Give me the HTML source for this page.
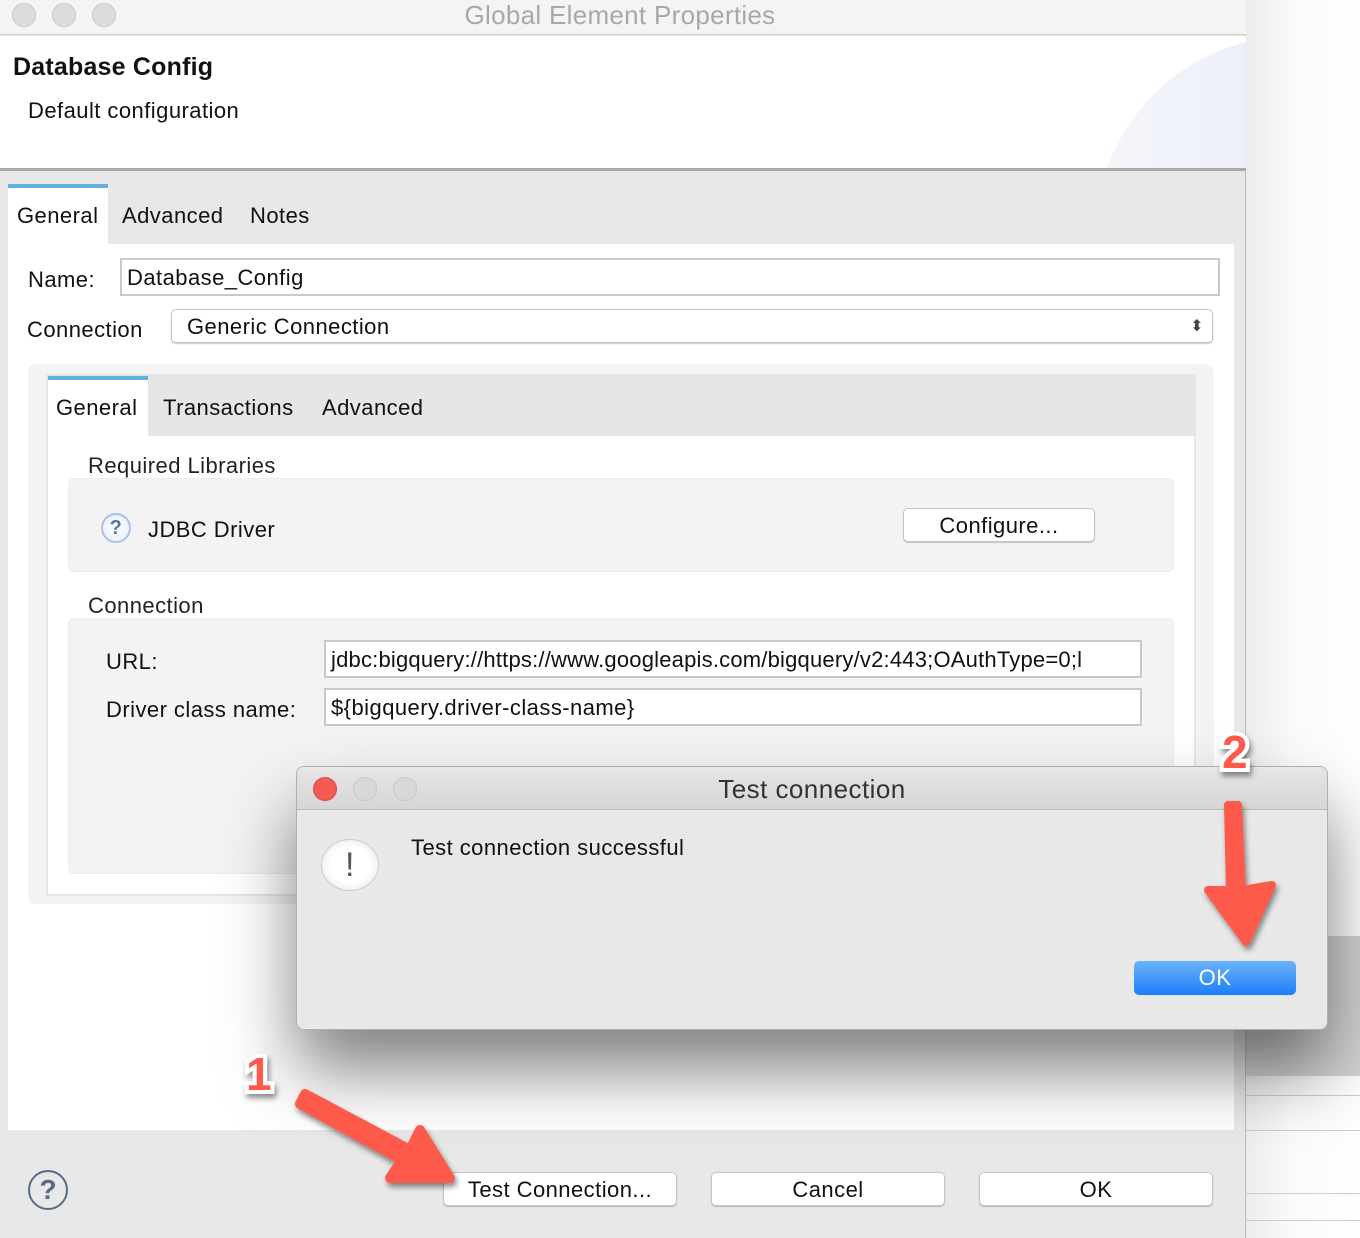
<!DOCTYPE html>
<html><head><meta charset="utf-8"><style>
*{box-sizing:border-box;margin:0;padding:0}
body{width:1360px;height:1238px;position:relative;overflow:hidden;background:#fff;font-family:"Liberation Sans",sans-serif;color:#111;font-size:22px;letter-spacing:.45px}
.a{position:absolute}
.inp{position:absolute;background:#fff;border:2px solid #c9c9c9;padding-left:5px;line-height:35px;font-size:22px;white-space:nowrap;overflow:hidden}
.btn{position:absolute;background:#fff;border:1px solid #c4c4c4;border-radius:5px;box-shadow:0 1px 1px rgba(0,0,0,.2);text-align:center;font-size:22px;line-height:34px}
.dot{position:absolute;width:24px;height:24px;border-radius:50%;background:#d8d8d8;border:1px solid #c8c8c8}
</style></head><body>
<div class="a" style="left:1246px;top:0;width:114px;height:1238px;background:linear-gradient(90deg,#ececec,#fafafa 40%,#fff)"></div>
<div class="a" style="left:1246px;top:936px;width:114px;height:140px;background:#d4d4d4"></div>
<div class="a" style="left:1246px;top:1095px;width:114px;height:1px;background:#ccc"></div>
<div class="a" style="left:1246px;top:1130px;width:114px;height:1px;background:#ccc"></div>
<div class="a" style="left:1246px;top:1193px;width:114px;height:1px;background:#ccc"></div>
<div class="a" style="left:1246px;top:1220px;width:114px;height:1px;background:#ccc"></div>

<div class="a" style="left:0;top:0;width:1246px;height:1238px;background:#e8e8e8;border-right:1px solid #bdbdbd"></div>
<div class="a" style="left:0;top:0;width:1246px;height:35px;background:#f4f4f4;border-bottom:1px solid #d0d0d0"></div>
<div class="dot" style="left:12px;top:3px;background:#dcdcdc"></div>
<div class="dot" style="left:52px;top:3px;background:#dcdcdc"></div>
<div class="dot" style="left:92px;top:3px;background:#dcdcdc"></div>
<div class="a" style="left:0;top:0;width:1240px;text-align:center;line-height:30px;font-size:26px;color:#a8a8a8;letter-spacing:.3px">Global Element Properties</div>
<div class="a" style="left:0;top:36px;width:1246px;height:132px;background:#fff;overflow:hidden">
 <div class="a" style="left:1095px;top:0;width:400px;height:400px;border-radius:50%;background:linear-gradient(90deg,#f5f6fb,#dfe4f4)"></div>
</div>
<div class="a" style="left:0;top:168px;width:1246px;height:3px;background:#a8a8a8"></div>
<div class="a" style="left:13px;top:53px;font-size:25px;font-weight:bold;letter-spacing:.2px">Database Config</div>
<div class="a" style="left:28px;top:98px">Default configuration</div>

<div class="a" style="left:8px;top:184px;width:100px;height:60px;background:#fff;border-top:4px solid #5fb0dd"></div>
<div class="a" style="left:17px;top:203px">General</div>
<div class="a" style="left:122px;top:203px">Advanced</div>
<div class="a" style="left:250px;top:203px">Notes</div>
<div class="a" style="left:8px;top:244px;width:1226px;height:886px;background:#fff"></div>

<div class="a" style="left:28px;top:267px">Name:</div>
<div class="inp" style="left:120px;top:258px;width:1100px;height:38px">Database_Config</div>
<div class="a" style="left:27px;top:317px">Connection</div>
<div class="btn" style="left:171px;top:309px;width:1042px;height:34px;text-align:left;padding-left:15px">Generic Connection<span style="position:absolute;right:8px;top:0;font-size:16px;color:#444">⬍</span></div>

<div class="a" style="left:28px;top:364px;width:1186px;height:540px;background:#f3f3f3;border-radius:8px"></div>
<div class="a" style="left:46px;top:376px;width:1150px;height:520px;background:#fff;border:2px solid #e6e6e6;border-top:0"></div>
<div class="a" style="left:46px;top:374px;width:1150px;height:62px;background:#e6e6e6"></div>
<div class="a" style="left:48px;top:376px;width:100px;height:60px;background:#fff;border-top:4px solid #5fb0dd"></div>
<div class="a" style="left:56px;top:395px">General</div>
<div class="a" style="left:163px;top:395px">Transactions</div>
<div class="a" style="left:322px;top:395px">Advanced</div>

<div class="a" style="left:88px;top:453px;color:#222">Required Libraries</div>
<div class="a" style="left:68px;top:478px;width:1106px;height:94px;background:#f3f3f3;border:1px solid #ececec;border-radius:6px"></div>
<div class="a" style="left:101px;top:513px;width:30px;height:30px;border-radius:50%;border:2px solid #a9c3e6;background:radial-gradient(#fff,#e4ecf8);text-align:center;line-height:26px;font-size:20px;color:#5577aa;font-weight:bold">?</div>
<div class="a" style="left:148px;top:517px">JDBC Driver</div>
<div class="btn" style="left:903px;top:508px;width:192px;height:34px">Configure...</div>

<div class="a" style="left:88px;top:593px;color:#222">Connection</div>
<div class="a" style="left:68px;top:618px;width:1106px;height:256px;background:#f3f3f3;border:1px solid #ececec;border-radius:6px"></div>
<div class="a" style="left:106px;top:649px">URL:</div>
<div class="inp" style="left:324px;top:640px;width:818px;height:38px;letter-spacing:.2px">jdbc:bigquery://https://www.googleapis.com/bigquery/v2:443;OAuthType=0;l</div>
<div class="a" style="left:106px;top:697px">Driver class name:</div>
<div class="inp" style="left:324px;top:688px;width:818px;height:38px">${bigquery.driver-class-name}</div>

<div class="a" style="left:296px;top:770px;width:1032px;height:260px;box-shadow:0 40px 70px rgba(0,0,0,.5);border-radius:8px"></div>

<div class="a" style="left:28px;top:1170px;width:40px;height:40px;border-radius:50%;border:2px solid #5b6a86;text-align:center;line-height:36px;font-size:28px;font-weight:bold;color:#5b6a86;letter-spacing:0">?</div>
<div class="btn" style="left:443px;top:1172px;width:234px;height:34px">Test Connection...</div>
<div class="btn" style="left:711px;top:1172px;width:234px;height:34px">Cancel</div>
<div class="btn" style="left:979px;top:1172px;width:234px;height:34px">OK</div>

<div class="a" style="left:296px;top:766px;width:1032px;height:264px;background:#e8e8e8;border:1px solid #b0b0b0;border-radius:8px;overflow:hidden">
 <div class="a" style="left:0;top:0;width:1032px;height:43px;background:linear-gradient(#e6e6e6,#d6d6d6);border-bottom:1px solid #bbb"></div>
 <div class="dot" style="left:16px;top:10px;background:#f25a52;border-color:#d94a43"></div>
 <div class="dot" style="left:56px;top:10px"></div>
 <div class="dot" style="left:96px;top:10px"></div>
 <div class="a" style="left:0;top:7px;width:1030px;text-align:center;font-size:26px;color:#333">Test connection</div>
 <div class="a" style="left:24px;top:72px;width:58px;height:52px;border-radius:50%;background:radial-gradient(#fff 50%,#e0e0e0);border:1px solid #ccc;text-align:center;font-size:34px;line-height:50px;color:#555">!</div>
 <div class="a" style="left:114px;top:68px">Test connection successful</div>
 <div class="a" style="left:837px;top:194px;width:162px;height:34px;border-radius:5px;background:linear-gradient(#6cb3fa,#1c7ef7);color:#fff;text-align:center;line-height:34px;font-size:22px">OK</div>
</div>

<svg class="a" style="left:0;top:0" width="1360" height="1238">
 <defs><filter id="s"><feDropShadow dx="2" dy="4" stdDeviation="3" flood-opacity=".45"/></filter></defs>
 <g filter="url(#s)" fill="#fd5a4c">
  <path d="M1238 805 L1242 890 L1272 885 L1246 942 L1208 890 L1230 890 L1228 805 Z" stroke="#fd5a4c" stroke-width="8" stroke-linejoin="round"/>
  <path d="M305 1094 L410 1150 L420 1130 L450 1178 L390 1178 L402 1160 L300 1104 Z" stroke="#fd5a4c" stroke-width="10" stroke-linejoin="round"/>
 </g>
 <g font-family="Liberation Sans" font-weight="bold" font-size="46" fill="#fd5a4c" stroke="#fff" stroke-width="8" paint-order="stroke" filter="url(#s)">
  <text x="1222" y="768">2</text>
  <text x="246" y="1090">1</text>
 </g>
</svg>
</body></html>
